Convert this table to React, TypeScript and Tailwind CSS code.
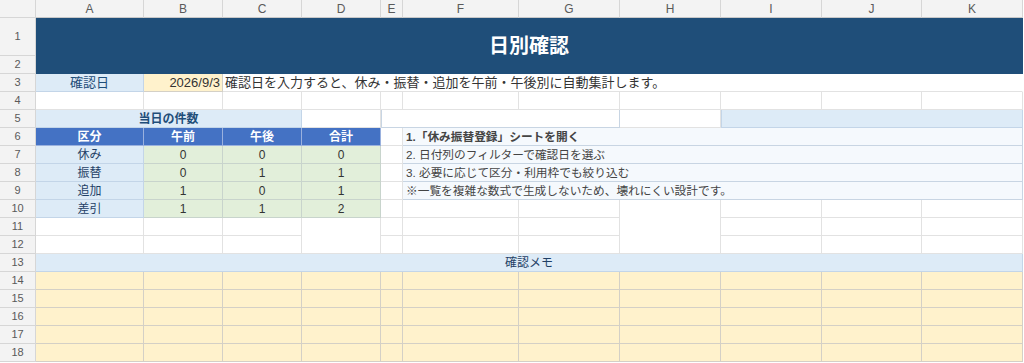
import type { ReactNode } from "react";

type Tone = "plain" | "label" | "yellow" | "green" | "head" | "note" | "rowhead" | "title" | "box";

const tones: Record<Tone, string> = {
  plain: "bg-white border-[#e2e2e2]",
  label: "bg-[#ddebf7] border-[#c3d5e8] text-[#1f3f66]",
  yellow: "bg-[#fff2cc] border-[#d4d0c6]",
  green: "bg-[#e2efda] border-[#c8d4cc] text-[#333333]",
  head: "bg-[#4472c4] border-[#9ab1de] text-white font-bold",
  note: "bg-[#f5f9fd] border-[#c8d5e3] text-[#444444]",
  rowhead: "bg-[#f3f3f3] border-[#d6d6d6] text-[#5a5a5a] text-[11px] justify-center",
  title: "bg-[#1f4e79] border-[#1f4e79] text-white",
  box: "bg-white border-[#c8d5e3]",
};

function Cell({
  tone = "plain",
  className = "",
  children,
}: {
  tone?: Tone;
  className?: string;
  children?: ReactNode;
}) {
  return (
    <div
      className={`flex items-center overflow-hidden whitespace-nowrap border-r border-b ${tones[tone]} ${className}`}
    >
      {children}
    </div>
  );
}

const letters = ["A", "B", "C", "D", "E", "F", "G", "H", "I", "J", "K"];

const counts = [
  { label: "休み", am: 0, pm: 0, total: 0 },
  { label: "振替", am: 0, pm: 1, total: 1 },
  { label: "追加", am: 1, pm: 0, total: 1 },
];

const steps = [
  "2. 日付列のフィルターで確認日を選ぶ",
  "3. 必要に応じて区分・利用枠でも絞り込む",
  "※一覧を複雑な数式で生成しないため、壊れにくい設計です。",
];

export default function App() {
  return (
    <div className="h-[363px] w-[1024px] overflow-hidden bg-white font-[Liberation_Sans,Noto_Sans_CJK_JP,sans-serif] text-[13px] text-[#333333]">
      <div className="grid grid-cols-[36px_108px_79px_79px_79px_22px_116px_101px_101px_101px_100px_101px] grid-rows-[18px_38px_18px_repeat(16,18px)]">
        {/* column header */}
        <Cell tone="rowhead" className="border-[#c8c8c8]" />
        {letters.map((l) => (
          <Cell key={l} tone="rowhead" className="text-[12px] border-b-[#c8c8c8]">
            {l}
          </Cell>
        ))}

        {/* 1-2 title */}
        <Cell tone="rowhead">1</Cell>
        <Cell tone="title" className="col-span-11 row-span-2 justify-center text-[20px] font-bold">
          日別確認
        </Cell>
        <Cell tone="rowhead">2</Cell>

        {/* 3 */}
        <Cell tone="rowhead">3</Cell>
        <Cell tone="label" className="justify-center text-[#1f4e79]">
          確認日
        </Cell>
        <Cell tone="yellow" className="justify-end pr-[2px]">
          2026/9/3
        </Cell>
        <Cell className="col-span-9 pl-[2px] border-r-white">
          確認日を入力すると、休み・振替・追加を午前・午後別に自動集計します。
        </Cell>

        {/* 4 */}
        <Cell tone="rowhead">4</Cell>
        {letters.map((l) => (
          <Cell key={`r4${l}`} />
        ))}

        {/* 5 */}
        <Cell tone="rowhead">5</Cell>
        <Cell tone="label" className="col-span-3 justify-center text-[12px] font-bold text-[#1f4e79]">
          当日の件数
        </Cell>
        <Cell />
        <Cell tone="box" className="col-span-3 border-l" />
        <Cell />
        <Cell tone="label" className="col-span-3 border-l" />

        {/* 6 */}
        <Cell tone="rowhead">6</Cell>
        <Cell tone="head" className="justify-center text-[12px]">区分</Cell>
        <Cell tone="head" className="justify-center text-[12px]">午前</Cell>
        <Cell tone="head" className="justify-center text-[12px]">午後</Cell>
        <Cell tone="head" className="justify-center text-[12px]">合計</Cell>
        <Cell />
        <Cell tone="note" className="col-span-6 pl-[3px] text-[11.7px] font-bold text-[#222222]">
          1.「休み振替登録」シートを開く
        </Cell>

        {/* 7-9 */}
        {counts.map((r, i) => (
          <div key={r.label} className="contents">
            <Cell tone="rowhead">{7 + i}</Cell>
            <Cell tone="label" className="justify-center text-[12px]">{r.label}</Cell>
            <Cell tone="green" className="justify-center text-[12px]">{r.am}</Cell>
            <Cell tone="green" className="justify-center text-[12px]">{r.pm}</Cell>
            <Cell tone="green" className="justify-center text-[12px]">{r.total}</Cell>
            <Cell />
            <Cell tone="note" className="col-span-6 pl-[3px] text-[11.7px]">
              {steps[i]}
            </Cell>
          </div>
        ))}

        {/* 10 */}
        <Cell tone="rowhead">10</Cell>
        <Cell tone="label" className="justify-center text-[12px]">差引</Cell>
        <Cell tone="green" className="justify-center text-[12px]">1</Cell>
        <Cell tone="green" className="justify-center text-[12px]">1</Cell>
        <Cell tone="green" className="justify-center text-[12px]">2</Cell>
        <Cell />
        <Cell />
        <Cell />
        <Cell className="row-span-3" />
        <Cell />
        <Cell />
        <Cell />

        {/* 11 */}
        <Cell tone="rowhead">11</Cell>
        <Cell />
        <Cell />
        <Cell />
        <Cell className="row-span-2" />
        <Cell />
        <Cell />
        <Cell />
        <Cell />
        <Cell />
        <Cell />

        {/* 12 */}
        <Cell tone="rowhead">12</Cell>
        <Cell />
        <Cell />
        <Cell />
        <Cell />
        <Cell />
        <Cell />
        <Cell />
        <Cell />
        <Cell />

        {/* 13 */}
        <Cell tone="rowhead">13</Cell>
        <Cell tone="label" className="col-span-11 justify-center text-[12px] text-[#1f3f66]">
          確認メモ
        </Cell>

        {/* 14-18 memo */}
        {[14, 15, 16, 17, 18].map((n) => (
          <div key={n} className="contents">
            <Cell tone="rowhead">{n}</Cell>
            {letters.map((l) => (
              <Cell key={`${n}${l}`} tone="yellow" />
            ))}
          </div>
        ))}
      </div>
    </div>
  );
}
